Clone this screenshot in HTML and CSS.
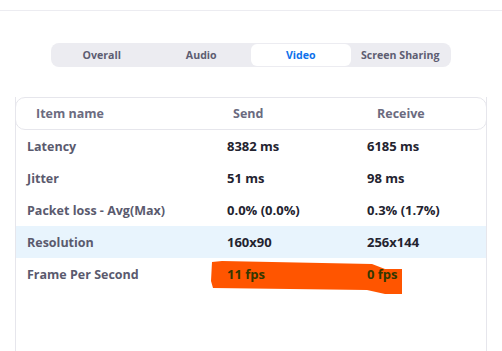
FILE: index.html
```html
<!DOCTYPE html>
<html>
<head>
<meta charset="utf-8">
<link rel="stylesheet" href="styles.css">
</head>
<body>
<div class="topbar"></div>
<div class="tabs">
  <div class="tab">Overall</div>
  <div class="tab">Audio</div>
  <div class="tab active">Video</div>
  <div class="tab">Screen Sharing</div>
</div>
<div class="card">
  <div class="head">
    <div class="hc h1">Item name</div>
    <div class="hc h2">Send</div>
    <div class="hc h3">Receive</div>
  </div>
  <div class="row"><div class="name">Latency</div><div class="val">8382 ms</div><div class="val">6185 ms</div></div>
  <div class="row"><div class="name">Jitter</div><div class="val">51 ms</div><div class="val">98 ms</div></div>
  <div class="row"><div class="name">Packet loss - Avg(Max)</div><div class="val">0.0% (0.0%)</div><div class="val">0.3% (1.7%)</div></div>
  <div class="row hl"><div class="name">Resolution</div><div class="val">160x90</div><div class="val">256x144</div></div>
  <div class="row fps"><div class="name">Frame Per Second</div><div class="val">11 fps</div><div class="val">0 fps</div></div>
  <svg class="scribble" width="194" height="36" viewBox="-2 0 194 36">
    <polygon points="0,1 10,0 160,3 173,8 190,8 190,33 173,33 155,29 1,27 -1,20" fill="#ff5500"/>
  </svg>
</div>
</body>
</html>
```
FILE: styles.css
```css
html, body {
  margin: 0;
  padding: 0;
  background: #ffffff;
  font-family: "Open Sans", "Noto Sans", sans-serif;
}
body {
  width: 502px;
  height: 351px;
  overflow: hidden;
}
.topbar {
  height: 10px;
  border-bottom: 1px solid #ececf1;
}
.tabs {
  width: 398px;
  height: 22px;
  margin: 32px auto 0;
  padding: 1px;
  background: #ececf1;
  border-radius: 8px;
  display: grid;
  grid-template-columns: repeat(4, 1fr);
}
.tab {
  display: flex;
  align-items: center;
  justify-content: center;
  font-size: 10.6px;
  font-weight: 700;
  color: #5d5d72;
  border-radius: 6px;
}
.tab.active {
  background: #ffffff;
  color: #0e71eb;
}
.card {
  position: relative;
  width: 470px;
  margin: 30px auto 0;
  height: 260px;
  border-left: 1px solid #e6e6ec;
  border-right: 1px solid #e6e6ec;
}
.head {
  height: 31px;
  border: 1px solid #e6e6ec;
  border-radius: 10px;
  margin: 0 -1px;
  display: grid;
  grid-template-columns: 211px 140px 1fr;
  align-items: center;
}
.hc {
  font-size: 12.5px;
  font-weight: 700;
  color: #6b6b80;
}
.h1 { padding-left: 20px; }
.h2 { padding-left: 6px; }
.h3 { padding-left: 10px; }
.row {
  position: relative;
  z-index: 1;
  height: 32px;
  display: grid;
  grid-template-columns: 211px 140px 1fr;
  align-items: center;
}
.row.hl {
  background: #e8f4fd;
}
.name {
  padding-left: 11px;
  font-size: 12.5px;
  font-weight: 700;
  color: #5a5a6e;
}
.val {
  font-size: 13px;
  font-weight: 700;
  color: #23232f;
}
.fps .val {
  color: #333800;
}
.scribble {
  position: absolute;
  left: 194px;
  top: 164px;
  z-index: 0;
}
```
